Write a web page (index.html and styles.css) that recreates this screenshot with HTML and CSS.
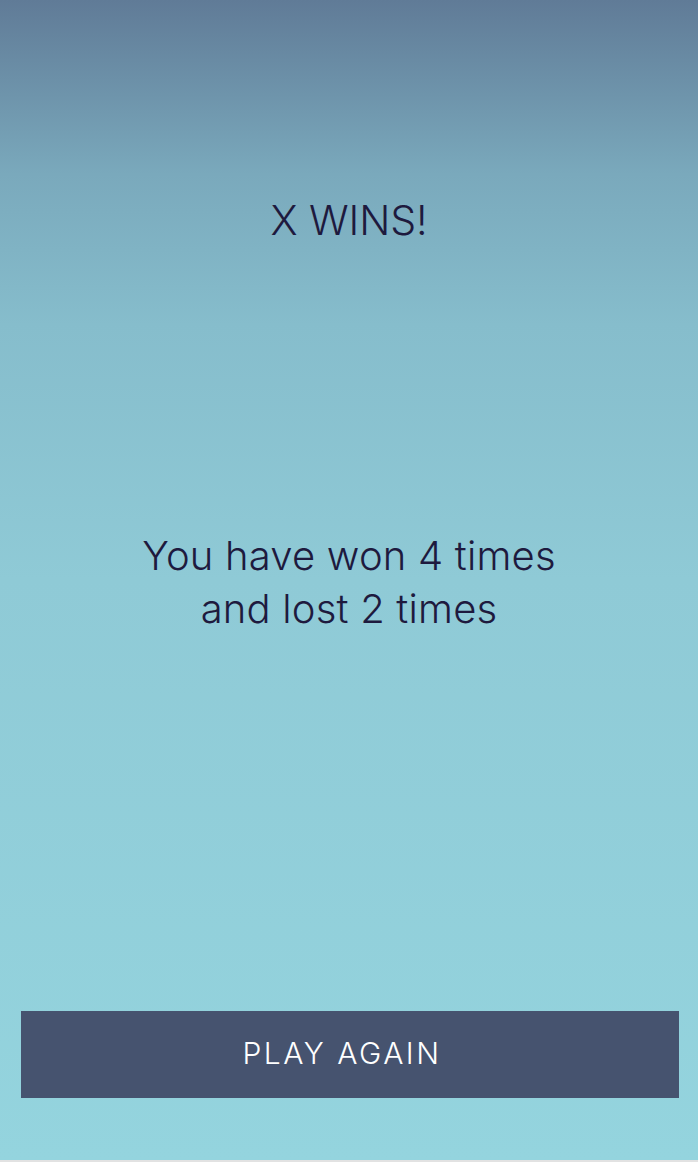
FILE: index.html
```html
<!DOCTYPE html>
<html>
<head>
<meta charset="utf-8">
<link rel="stylesheet" href="styles.css">
</head>
<body>
<main class="screen">
  <h1 class="winner">X WINS!</h1>
  <p class="stats">You have won 4 times<br>and lost 2 times</p>
  <button class="play-again">PLAY AGAIN</button>
</main>
</body>
</html>
```
FILE: styles.css
```css
html, body {
  margin: 0;
  padding: 0;
  background: #e2e2e2;
}
.screen {
  height: 1160px;
  display: flex;
  flex-direction: column;
  align-items: center;
  background: linear-gradient(to bottom, #607b97 0%, #7aa9bc 15%, #86bdcc 28%, #8fcad6 50%, #94d4de 100%);
  font-family: Inter, Roboto, "Liberation Sans", sans-serif;
  color: #1e1a3e;
}
.winner {
  margin: 195px 0 0;
  font-size: 41px;
  font-weight: 300;
  line-height: 50px;
  letter-spacing: -0.1px;
}
.stats {
  margin: 284px 0 0;
  font-size: 40px;
  font-weight: 300;
  line-height: 53px;
  letter-spacing: 0.2px;
  text-align: center;
}
.play-again {
  margin: auto 19px 62px 21px;
  align-self: stretch;
  height: 87px;
  border: none;
  background: #46536f;
  color: #ffffff;
  font-family: Inter, "Noto Sans", sans-serif;
  font-weight: 300;
  font-size: 30px;
  letter-spacing: 2.5px;
  padding: 0 16px 4px 0;
}
```
